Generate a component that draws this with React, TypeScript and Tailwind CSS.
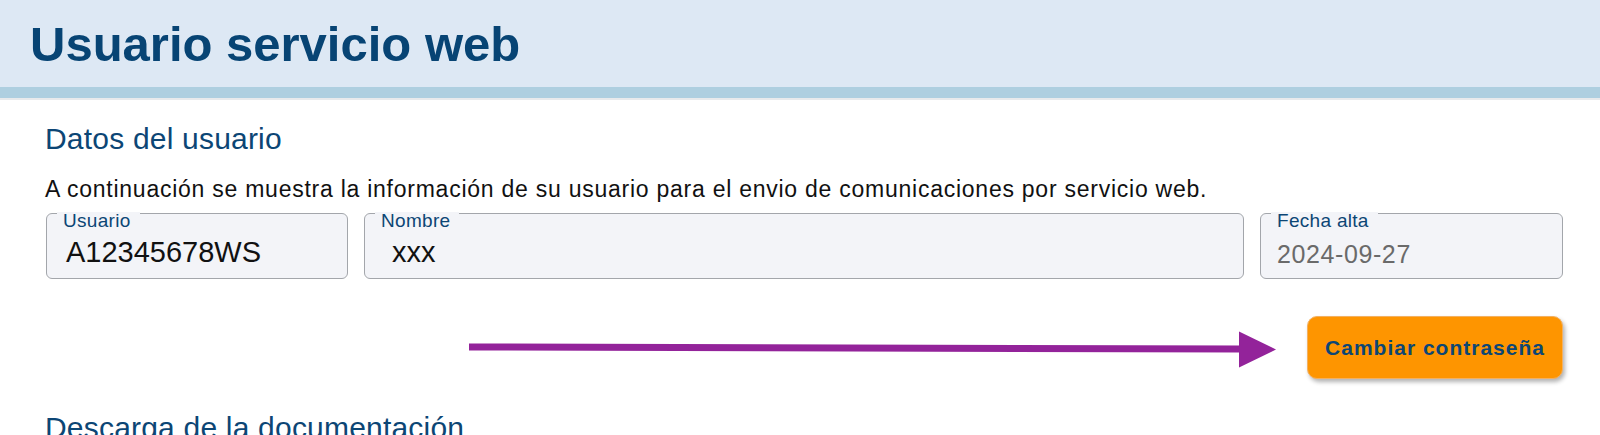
import React from "react";

function Field({
  label,
  value,
  valueClass,
}: {
  label: string;
  value: string;
  valueClass: string;
}) {
  return (
    <div className="relative h-[66px] rounded-[6px] border border-[#a3a6ab] bg-[#f3f4f8]">
      <span className="absolute left-[10px] top-[-2px] bg-[#f3f4f8] pl-[6px] pr-[9px] text-[19px] leading-[18px] tracking-[0.3px] text-[#0c4675]">
        {label}
      </span>
      <div className={valueClass}>{value}</div>
    </div>
  );
}

export default function App() {
  return (
    <div className="min-h-[435px] w-full overflow-hidden bg-white font-['Liberation_Sans',Arial,sans-serif]">
      <div className="h-[87px] bg-[#dde8f4] pl-[30px] pt-[20px]">
        <h1 className="text-[49px] font-bold leading-[48px] text-[#074474]">
          Usuario servicio web
        </h1>
      </div>
      <div className="h-[11px] bg-[#aecfe0]" />
      <div className="h-[2px] bg-[#e8eaec]" />

      <div className="pl-[45px] pr-[37px]">
        <h2 className="mt-[24px] text-[30px] leading-[30px] tracking-[0.2px] text-[#0c4675]">
          Datos del usuario
        </h2>
        <p className="mt-[24px] text-[23px] leading-[23px] tracking-[0.75px] text-[#111111]">
          A continuación se muestra la información de su usuario para el envio de comunicaciones por servicio web.
        </p>

        <div className="mt-[12px] grid grid-cols-[302px_1fr_303px] gap-[16px] pl-[1px]">
          <Field
            label="Usuario"
            value="A12345678WS"
            valueClass="pl-[19px] pt-[24px] text-[29px] leading-[29px] text-[#111111]"
          />
          <Field
            label="Nombre"
            value=" xxx"
            valueClass="whitespace-pre pl-[19px] pt-[24px] text-[29px] leading-[29px] text-[#111111]"
          />
          <Field
            label="Fecha alta"
            value="2024-09-27"
            valueClass="pl-[16px] pt-[28px] text-[25px] leading-[25px] tracking-[0.6px] text-[#6a6a6a]"
          />
        </div>

        <div className="mt-[37px] flex items-center justify-end gap-[31px]">
          <svg width="807" height="40" viewBox="0 0 807 40" className="shrink-0">
            <polygon points="0,15.5 772,17.5 772,24.5 0,22.5" fill="#93239a" />
            <polygon points="770,3.5 807,21.5 770,39.5" fill="#93239a" />
          </svg>
          <button className="h-[63px] w-[256px] shrink-0 rounded-[10px] border border-[#f3b060] bg-[#fe9500] text-[21px] font-bold tracking-[1px] text-[#0c4675] shadow-[2px_3px_4px_rgba(0,0,0,0.3)]">
            Cambiar contraseña
          </button>
        </div>

        <h2 className="mt-[34px] text-[30px] leading-[30px] tracking-[0.2px] text-[#0c4675]">
          Descarga de la documentación
        </h2>
      </div>
    </div>
  );
}
